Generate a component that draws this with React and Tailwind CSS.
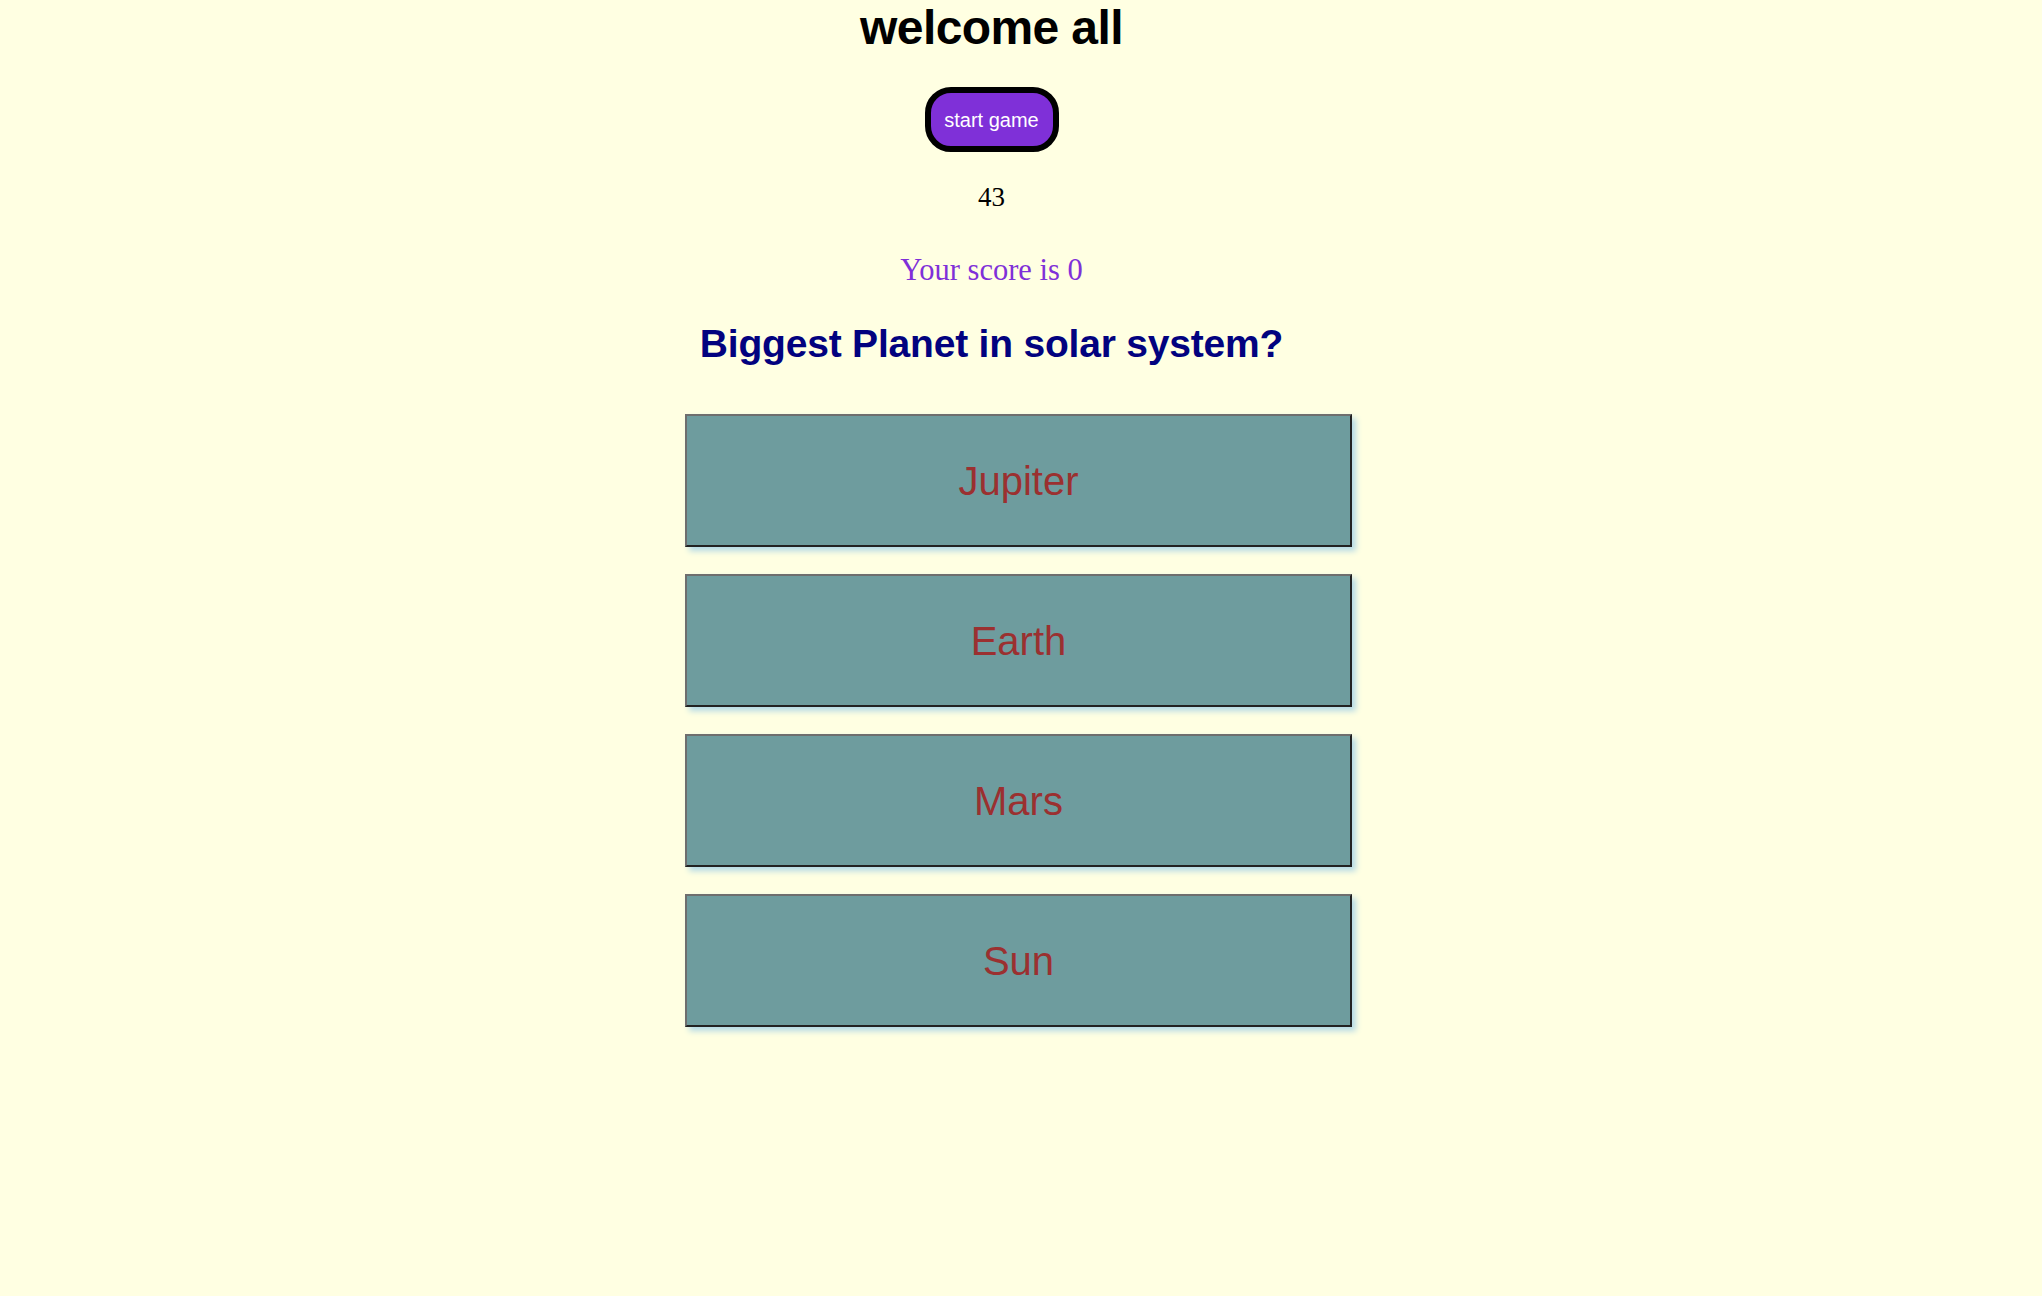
const answers = ['Jupiter', 'Earth', 'Mars', 'Sun'];

const App = () => {
  return (
    <div className="min-h-[1296px] w-full bg-[#ffffe2] font-['Liberation_Sans',Arial,sans-serif]">
      <div className="flex flex-col items-center pr-[59px]">
        <h1 className="m-0 text-[48px] font-bold leading-[55px] tracking-[-0.6px] text-black">welcome all</h1>

        <button className="mt-[32px] flex h-[65px] w-[134px] items-center justify-center rounded-[26px] border-[6px] border-black bg-[#7f30d8] text-[20px] text-white">
          start game
        </button>

        <div className="mt-[31px] font-['Liberation_Serif',serif] text-[27px] leading-[28px] text-black">43</div>

        <p className="mt-[42px] font-['Liberation_Serif',serif] text-[30.5px] leading-[34px] text-[#7f30d8]">Your score is 0</p>

        <h2 className="mt-[34px] text-[39px] font-bold leading-[45px] tracking-[-0.2px] text-[#02027f]">
          Biggest Planet in solar system?
        </h2>
      </div>

      <div className="mt-[48px] flex flex-col items-center gap-[27px] pr-[5px]">
        {answers.map((a) => (
          <button
            key={a}
            className="flex h-[133px] w-[667px] items-center justify-center border-2 border-t-[#6e6e6e] border-l-[#6e6e6e] border-r-[#222222] border-b-[#222222] bg-[#6e9c9e] text-[40px] text-[#9b3030] shadow-[4px_4px_6px_#b3d9e6]"
          >
            {a}
          </button>
        ))}
      </div>
    </div>
  );
};

export default App;
